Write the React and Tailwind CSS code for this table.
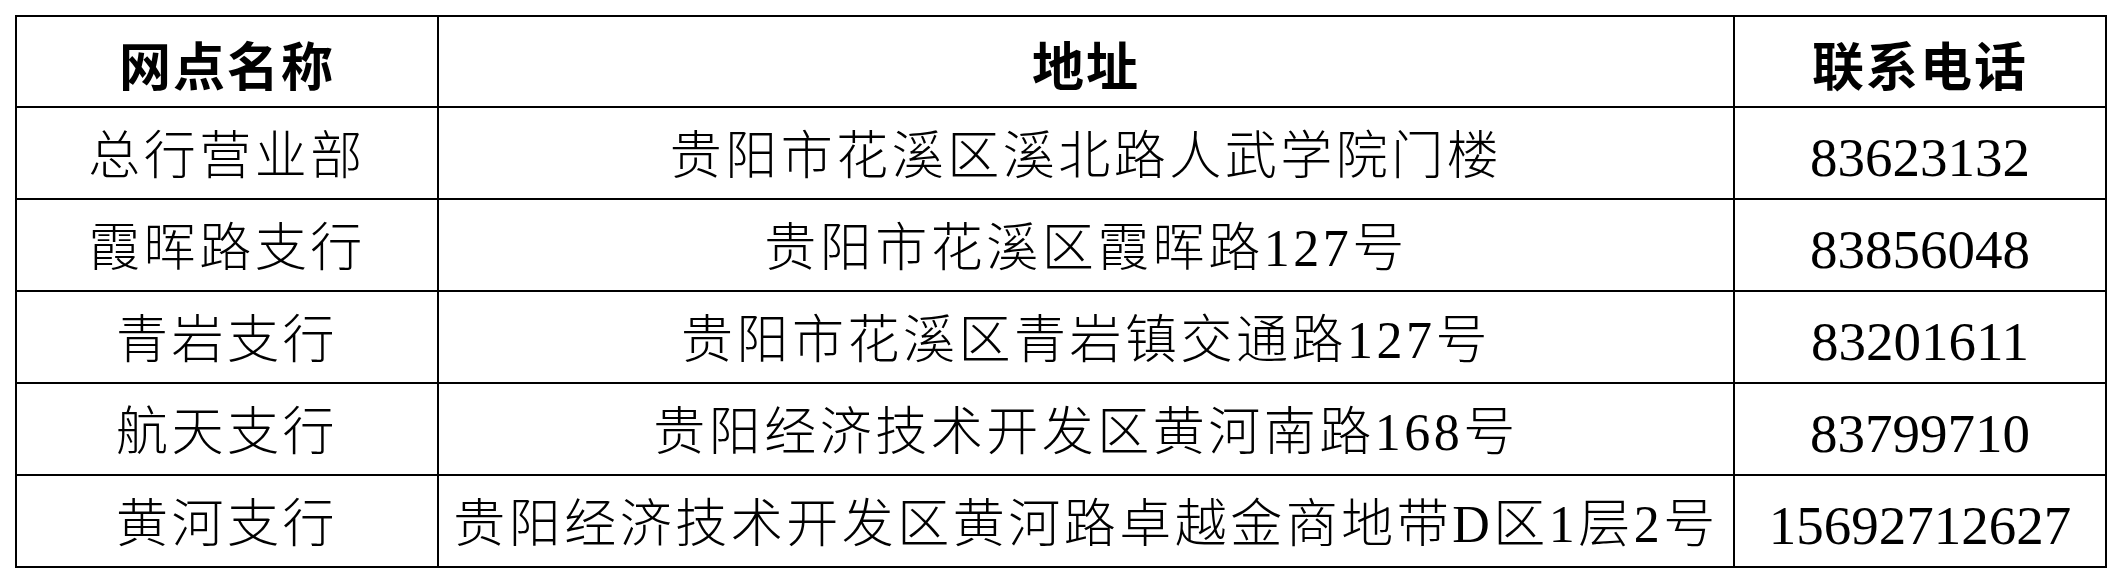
import React from 'react';

const rows = [
  { name: '总行营业部', addr: '贵阳市花溪区溪北路人武学院门楼', tel: '83623132' },
  { name: '霞晖路支行', addr: '贵阳市花溪区霞晖路127号', tel: '83856048' },
  { name: '青岩支行', addr: '贵阳市花溪区青岩镇交通路127号', tel: '83201611' },
  { name: '航天支行', addr: '贵阳经济技术开发区黄河南路168号', tel: '83799710' },
  { name: '黄河支行', addr: '贵阳经济技术开发区黄河路卓越金商地带D区1层2号', tel: '15692712627' },
];

const cell = 'border-r-2 border-b-2 border-black flex items-center justify-center';
const body = "font-['Liberation_Serif','Noto_Sans_CJK_SC',serif] font-light text-[52px] tracking-[3.5px] leading-none text-black pt-2 whitespace-nowrap";
const head = "font-['Noto_Sans_CJK_SC',sans-serif] font-bold text-[52px] tracking-[2px] leading-none text-black pt-1";

const App = () => {
  return (
    <div className="min-h-screen bg-white pt-[15px] pl-[15px]">
      <div className="grid grid-cols-[422px_1296px_372px] grid-rows-[91px_repeat(5,92px)] w-fit border-l-2 border-t-2 border-black">
        <div className={cell}><span className={head}>网点名称</span></div>
        <div className={cell}><span className={head}>地址</span></div>
        <div className={cell}><span className={head}>联系电话</span></div>
        {rows.map((r) => (
          <React.Fragment key={r.tel}>
            <div className={cell}><span className={body}>{r.name}</span></div>
            <div className={cell}><span className={body}>{r.addr}</span></div>
            <div className={cell}>
              <span className="font-['Liberation_Serif',serif] text-[55px] leading-none text-black pt-2">{r.tel}</span>
            </div>
          </React.Fragment>
        ))}
      </div>
    </div>
  );
};

export default App;
